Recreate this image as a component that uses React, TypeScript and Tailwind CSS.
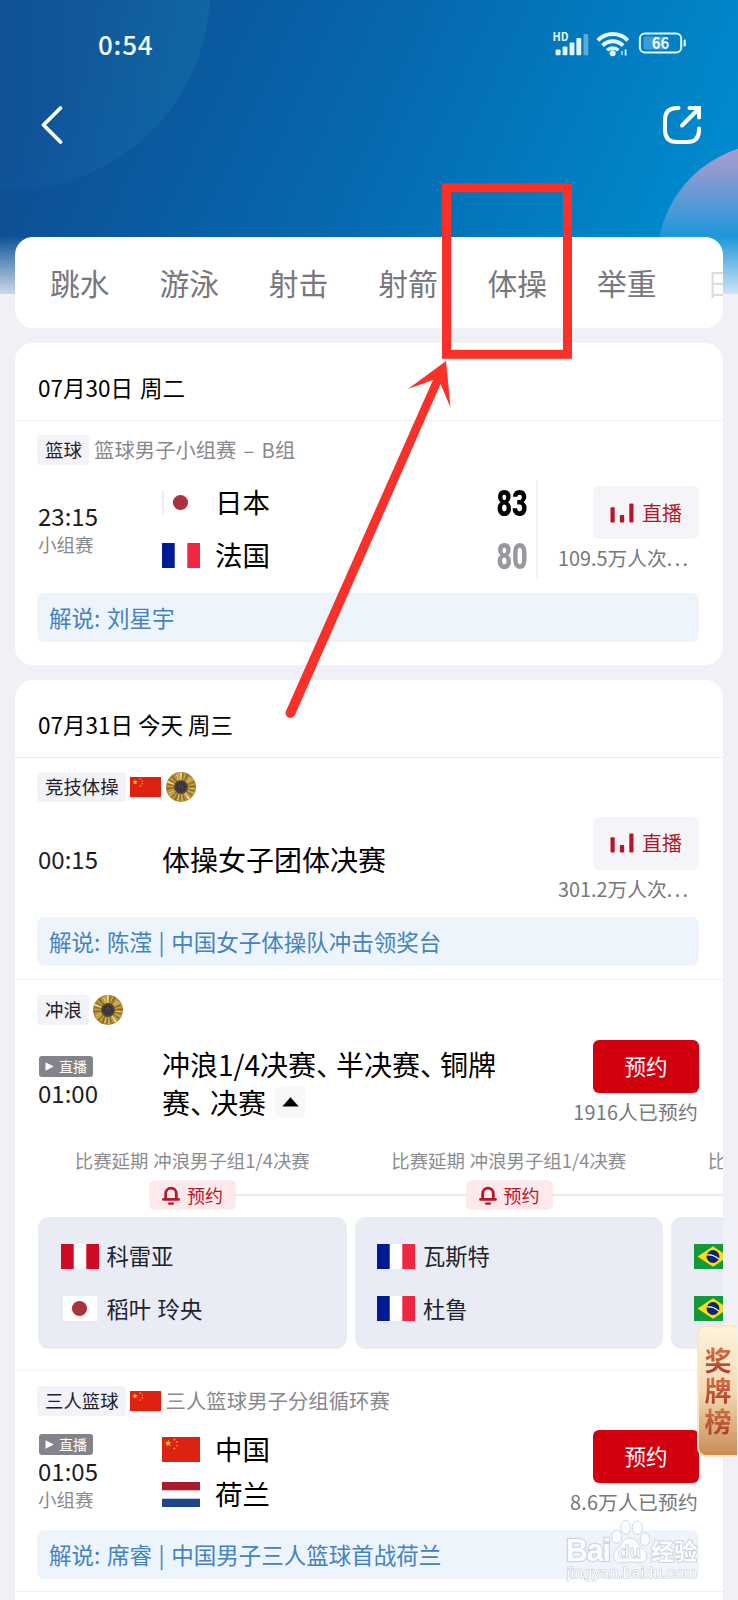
import type { ReactNode } from "react";
import clsx from "clsx";

const tabs = ["跳水", "游泳", "射击", "射箭", "体操", "举重", "日程"];

type Country = "jp" | "fr" | "cn" | "nl" | "pe" | "br";

const heats: { players: { country: Country; name: string }[] }[] = [
  { players: [{ country: "pe", name: "科雷亚" }, { country: "jp", name: "稻叶 玲央" }] },
  { players: [{ country: "fr", name: "瓦斯特" }, { country: "fr", name: "杜鲁" }] },
  { players: [{ country: "br", name: "" }, { country: "br", name: "" }] },
];

const STAR = "M0,-1 L0.225,-0.309 L0.951,-0.309 L0.363,0.118 L0.588,0.809 L0,0.382 L-0.588,0.809 L-0.363,0.118 L-0.951,-0.309 L-0.225,-0.309 Z";

function Flag({ country, className = "w-[38px] h-[25px]" }: { country: Country; className?: string }) {
  return (
    <svg viewBox="0 0 38 25" preserveAspectRatio="none" className={clsx("shrink-0 block", className)}>
      {country === "jp" && (
        <>
          <rect x="0.8" width="35.6" height="25" fill="#fff" />
          <rect x="0.5" width="0.8" height="25" fill="#d5d5d8" />
          <circle cx="18.5" cy="12.5" r="7.6" fill="#ad3140" />
        </>
      )}
      {country === "fr" && (
        <>
          <rect width="38" height="25" fill="#fff" />
          <rect width="12.7" height="25" fill="#001b94" />
          <rect x="25.3" width="12.7" height="25" fill="#ef2740" />
        </>
      )}
      {country === "pe" && (
        <>
          <rect width="38" height="25" fill="#fff" />
          <rect width="12.7" height="25" fill="#cf0a24" />
          <rect x="25.3" width="12.7" height="25" fill="#cf0a24" />
        </>
      )}
      {country === "nl" && (
        <>
          <rect width="38" height="25" fill="#fff" />
          <rect width="38" height="8.3" fill="#a91a2a" />
          <rect y="16.7" width="38" height="8.3" fill="#1f458c" />
        </>
      )}
      {country === "cn" && (
        <>
          <rect width="38" height="25" fill="#dd2211" />
          <path d={STAR} transform="translate(6.2 6.3) scale(3.6)" fill="#fbd61c" />
          <path d={STAR} transform="translate(12.4 2.6) scale(1.3)" fill="#fbd61c" />
          <path d={STAR} transform="translate(15 5) scale(1.3)" fill="#fbd61c" />
          <path d={STAR} transform="translate(15 8.6) scale(1.3)" fill="#fbd61c" />
          <path d={STAR} transform="translate(12.4 11.4) scale(1.3)" fill="#fbd61c" />
        </>
      )}
      {country === "br" && (
        <>
          <rect width="38" height="25" fill="#109a3a" />
          <path d="M3.5 12.5 L19 2.3 L34.5 12.5 L19 22.7 Z" fill="#fbdd16" />
          <circle cx="19" cy="12.5" r="6.4" fill="#10246e" />
          <path d="M12.8 11 Q19.5 10 24.8 15.2" stroke="#fff" strokeWidth="1.1" fill="none" />
        </>
      )}
    </svg>
  );
}

function Medal() {
  const rays = Array.from({ length: 37 }, (_, i) => i * (360 / 37));
  return (
    <svg viewBox="0 0 30 30" className="w-[30px] h-[30px] shrink-0">
      <circle cx="15" cy="15" r="15" fill="#ab862f" />
      {rays.map((angle, i) => (
        <path
          key={angle}
          d={i % 3 === 0 ? "M15 15 L14 0.4 L16 0.4 Z" : "M15 15 L14.5 1.5 L15.5 1.5 Z"}
          transform={`rotate(${angle} 15 15)`}
          fill={i % 5 === 0 ? "#f0e3ac" : i % 2 ? "#8c6a1f" : "#cfad55"}
        />
      ))}
      <circle cx="15" cy="15" r="7" fill="#4d4538" />
      <circle cx="15" cy="15" r="5" fill="#3a353a" />
      <path d="M13 17 L14 12.5 L16.5 13.5 L16 17.5" stroke="#57524f" strokeWidth="0.8" fill="none" />
    </svg>
  );
}

function Tag({ children }: { children: ReactNode }) {
  return (
    <span className="h-[30px] pl-[8px] pr-[7px] flex items-center rounded-[4px] bg-[#f3f2f8] text-[18.4px] text-[#20202c]">
      {children}
    </span>
  );
}

function Meta({ children }: { children: ReactNode }) {
  return <div className="flex items-center h-[30px] pl-[22px] gap-[4.5px]">{children}</div>;
}

function Time({ time, live, stage }: { time: string; live?: boolean; stage?: string }) {
  return (
    <div className="w-[124px] shrink-0 pl-px flex flex-col items-start">
      {live && (
        <span className="h-[21px] w-[54px] rounded-[3px] bg-[#83838b] text-white text-[14px] leading-none flex items-center justify-center gap-[5px]">
          <svg viewBox="0 0 9 9" className="w-[9px] h-[9px]">
            <path d="M0.5 0.3 L8.7 4.5 L0.5 8.7 Z" fill="#fff" />
          </svg>
          直播
        </span>
      )}
      <span className="text-[24px] leading-[31px] h-[34px] -ml-px text-[#1c1c1e]">{time}</span>
      {stage && <span className="-ml-px -mt-[2px] mb-[2px] text-[18.5px] leading-[24px] text-[#8a8a8e]">{stage}</span>}
    </div>
  );
}

function Team({ country, name, score, won }: { country: Country; name: string; score?: string; won?: boolean }) {
  return (
    <div className="h-[34px] flex items-center">
      <Flag country={country} />
      <span className="ml-[15px] -mt-[3px] text-[27.5px] leading-[34px] text-black">{name}</span>
      {score && (
        <span
          className={clsx(
            "ml-auto mt-[2px] origin-right scale-x-[0.75] font-['Roboto'] font-black text-[36px] leading-[34px]",
            won ? "text-black" : "text-[#97999e]"
          )}
        >
          {score}
        </span>
      )}
    </div>
  );
}

function LiveAction({ count }: { count: string }) {
  return (
    <div className="w-[142px] shrink-0 flex flex-col items-end">
      <button className="w-[106px] h-[53px] rounded-[6px] bg-[#f5f5f9] text-[#b0182a] text-[20px] flex items-center justify-center gap-[8px]">
        <svg viewBox="0 0 24 20" className="w-[24px] h-[20px]" fill="#b5162a">
          <rect x="0.5" y="4.2" width="4.2" height="15.3" rx="1" />
          <rect x="9.8" y="12" width="4.4" height="7.5" rx="1" />
          <rect x="19.3" y="0.5" width="4.2" height="19" rx="1" />
        </svg>
        直播
      </button>
      <span className="mt-[4px] w-full pl-px text-[19.8px] leading-[29px] text-[#77777b] whitespace-nowrap">
        {count}
        <span className="tracking-[2.4px]">...</span>
      </span>
    </div>
  );
}

function ReserveAction({ count }: { count: string }) {
  return (
    <div className="w-[142px] shrink-0 flex flex-col items-end">
      <button className="w-[106px] h-[53px] rounded-[6px] bg-[#d2000f] text-white text-[21.5px]">预约</button>
      <span className="mt-[4px] pr-px text-[19.8px] tracking-[0.2px] leading-[29px] text-[#77777b] whitespace-nowrap">{count}</span>
    </div>
  );
}

function Commentary({ children }: { children: ReactNode }) {
  return (
    <div className="ml-[22px] mr-[24px] h-[49px] pl-[12px] flex items-center rounded-[7px] bg-[#edf4fc] text-[22.5px] [word-spacing:1.6px] text-[#4283c0] whitespace-pre">
      {children}
    </div>
  );
}

// half-width ideographic comma, so list items sit closer together
function Comma() {
  return <span className="mr-[6px] [font-feature-settings:'halt']">、</span>;
}

function Heats() {
  return (
    <div className="flex gap-[8px] pl-[23px] h-[229px] overflow-hidden">
      {heats.map((heat, i) => (
        <div key={i} className="w-[308.5px] shrink-0">
          <p className="mt-[8px] h-[22px] leading-[22px] text-center text-[18.4px] text-[#8c8c90] [word-spacing:0.8px]">
            比赛延期 冲浪男子组1/4决赛
          </p>
          <div className="mt-[9px] h-[30px] flex items-center">
            <div className={clsx("h-[2px] w-[111px] shrink-0", i > 0 && "bg-[#ebebed]")} />
            <span className="w-[87px] shrink-0 h-[30px] rounded-[6px] bg-[#fde9eb] flex items-center justify-center gap-[7px] text-[18px] text-[#b5162a]">
              <svg viewBox="0 0 18 19" className="w-[18px] h-[19px]">
                <path d="M3.7 13 V7.5 A5.3 5.3 0 0 1 14.3 7.5 V13" fill="none" stroke="#b5162a" strokeWidth="2.8" />
                <path d="M1.4 13.4 H16.6" stroke="#b5162a" strokeWidth="2.6" strokeLinecap="round" />
                <path d="M7 17.6 H11" stroke="#b5162a" strokeWidth="2.2" strokeLinecap="round" />
              </svg>
              预约
            </span>
            <div className="h-[2px] w-[118.5px] shrink-0 bg-[#ebebed]" />
          </div>
          <div className="mt-[7px] h-[132px] rounded-[11px] bg-[#e9ecf4] pl-[22.5px] pt-[22px] flex flex-col gap-[18.5px]">
            {heat.players.map((player, j) => (
              <div key={j} className="h-[34px] flex items-center gap-[8px] text-[22.3px] [word-spacing:1.5px] text-[#20222c]">
                <Flag country={player.country} />
                {player.name}
              </div>
            ))}
          </div>
        </div>
      ))}
    </div>
  );
}

function StatusBar() {
  return (
    <div className="h-[88px] pl-[98px] pr-[52px] flex items-center justify-between text-[#f0faff]">
      <span className="-mt-[2px] text-[26px] font-medium tracking-[0.8px]">0:54</span>
      <svg viewBox="0 0 134 26" className="w-[134px] h-[26px] overflow-visible">
        <text x="0.5" y="10.3" fontSize="11" fontWeight="700" fill="#e4f6ff" fontFamily="Noto Sans CJK SC" textLength="16" lengthAdjust="spacingAndGlyphs">HD</text>
        <g fill="#e4f6ff">
          <rect x="3.6" y="18.4" width="5" height="5.8" rx="1" />
          <rect x="10.6" y="15.4" width="4.8" height="8.8" rx="1" />
          <rect x="17.6" y="11.4" width="4.8" height="12.8" rx="1" />
          <rect x="24.4" y="7" width="4.8" height="17.2" rx="1" />
          <rect x="31.5" y="3" width="4.8" height="21.2" rx="1" opacity="0.4" />
        </g>
        <g fill="none" stroke="#e4f6ff" strokeWidth="4">
          <path d="M45.8 9.3 A21 21 0 0 1 75.8 9.3" />
          <path d="M50.5 14.6 A14.5 14.5 0 0 1 71 14.6" />
          <path d="M55 19.2 A8.5 8.5 0 0 1 66.5 19.2" strokeWidth="3.4" />
        </g>
        <circle cx="60.7" cy="22.2" r="3" fill="#e4f6ff" />
        <path d="M70 20 V24" stroke="#8fcdf0" strokeWidth="1.8" />
        <path d="M73.6 18.5 V24.5" stroke="#e4f6ff" strokeWidth="1.8" />
        <rect x="87.9" y="2.4" width="41.3" height="19.2" rx="5" fill="none" stroke="#e4f6ff" strokeWidth="2" />
        <rect x="91.5" y="5.5" width="21" height="13" rx="2" fill="#6bb8e6" opacity="0.55" />
        <rect x="131.6" y="8.5" width="2.2" height="7" rx="1" fill="#e4f6ff" />
        <text x="108.5" y="18" textAnchor="middle" fontSize="16" fontWeight="700" fill="#eefaff" fontFamily="Noto Sans CJK SC" textLength="17.5" lengthAdjust="spacingAndGlyphs">66</text>
      </svg>
    </div>
  );
}

function Backdrop() {
  return (
    <svg viewBox="0 0 738 294" className="absolute left-0 top-0 w-[738px] h-[294px]">
      <defs>
        <linearGradient id="sky" gradientUnits="userSpaceOnUse" x1="60" y1="60" x2="700" y2="350">
          <stop offset="0" stopColor="#0e4f93" />
          <stop offset="0.42" stopColor="#0667ae" />
          <stop offset="0.9" stopColor="#0089cd" />
        </linearGradient>
        <linearGradient id="globe" gradientUnits="userSpaceOnUse" x1="0" y1="60" x2="210" y2="60">
          <stop offset="0" stopColor="#1b6fb4" stopOpacity="0.1" />
          <stop offset="1" stopColor="#1b7aa8" stopOpacity="0.4" />
        </linearGradient>
        <linearGradient id="ball" x1="0" y1="0" x2="0" y2="1">
          <stop offset="0" stopColor="#a79ccd" />
          <stop offset="0.12" stopColor="#8f9bd1" />
          <stop offset="0.4" stopColor="#1c98da" />
          <stop offset="1" stopColor="#1c98da" />
        </linearGradient>
        <linearGradient id="fade" x1="0" y1="0" x2="0" y2="1">
          <stop offset="0" stopColor="#eff1f8" stopOpacity="0" />
          <stop offset="1" stopColor="#eff1f8" stopOpacity="0.85" />
        </linearGradient>
      </defs>
      <rect width="738" height="294" fill="url(#sky)" />
      <circle cx="10" cy="-10" r="200" fill="url(#globe)" />
      <circle cx="774" cy="260" r="117" fill="url(#ball)" />
      <rect y="236" width="738" height="58" fill="url(#fade)" />
    </svg>
  );
}

function Watermark() {
  return (
    <svg viewBox="0 0 150 70" className="absolute left-[560px] top-[1515px] w-[150px] h-[70px] opacity-90">
      <g fill="#fdfeff" stroke="#cfd3da" strokeWidth="1">
        <g fontFamily="Liberation Sans, sans-serif" fontWeight="700" style={{ paintOrder: "stroke" }}>
          <text x="6" y="46" fontSize="30.5" strokeWidth="2.5" textLength="45">Bai</text>
          <text x="91" y="45" fontSize="23" strokeWidth="2" fontFamily="Noto Sans CJK SC" textLength="46">经验</text>
          <text x="7" y="62.5" fontSize="15.5" strokeWidth="1.4" fontWeight="400" textLength="130">jingyan.baidu.com</text>
        </g>
        <ellipse cx="56.7" cy="21.7" rx="5" ry="6.5" />
        <ellipse cx="65.7" cy="12.3" rx="5" ry="6.8" />
        <ellipse cx="77.3" cy="12.7" rx="5" ry="6.8" />
        <ellipse cx="85" cy="24.3" rx="4.8" ry="6.4" />
        <path d="M70 23 C77 23 78 30 82 33 C90 39 88 48 79 47.7 C73 46.7 68 46.7 62 47.7 C52 48 51 39 58 33 C62 30 63 23 70 23 Z" />
        <text x="69.5" y="43" textAnchor="middle" fontSize="19" fontWeight="700" fontFamily="Liberation Sans, sans-serif">du</text>
      </g>
    </svg>
  );
}

// hand-drawn style callout pointing at the gymnastics tab
function Callout() {
  return (
    <svg viewBox="0 0 738 760" className="absolute left-0 top-0 w-[738px] h-[760px] pointer-events-none">
      <rect x="446.5" y="187.8" width="121" height="166.5" fill="none" stroke="#fb3129" strokeWidth="9" />
      <path d="M446 361 L408 389 L433 380 L286 711 A4.8 4.8 0 0 0 295 715 L440.5 384 L450.5 407.5 Z" fill="#fb3129" />
    </svg>
  );
}

export default function App() {
  return (
    <div className="relative w-[738px] h-[1600px] overflow-hidden bg-[#eff1f7] font-['Noto_Sans_CJK_SC',sans-serif]">
      <Backdrop />

      <div className="relative">
        <StatusBar />
        <div className="h-[74px] pl-[40px] pr-[36px] flex items-center justify-between">
          <svg viewBox="0 0 24 40" className="w-[24px] h-[40px]">
            <path d="M20.5 3 L3.5 20 L20.5 37" fill="none" stroke="#fff" strokeWidth="3.8" strokeLinecap="round" strokeLinejoin="round" />
          </svg>
          <svg viewBox="0 0 40 40" className="w-[40px] h-[40px]" fill="none" stroke="#fff" strokeWidth="4" strokeLinecap="round">
            <path d="M16.5 3 H15 Q3 3 3 15 V25 Q3 37 15 37 H25 Q37 37 37 25 V23.5" />
            <path d="M20 20.5 L34.5 6" />
            <path d="M27.5 3 H37 V12.5" strokeLinejoin="miter" />
          </svg>
        </div>

        <nav className="mt-[75px] mx-[15px] h-[91px] pb-px rounded-[18px] bg-white overflow-hidden flex items-center gap-[49.4px] pl-[35px] text-[29.8px] text-[#77777d]">
          {tabs.map((tab, i) => (
            <span key={tab} className={clsx("shrink-0 w-[60px] whitespace-nowrap", i === tabs.length - 1 && "opacity-25")}>
              {tab}
            </span>
          ))}
        </nav>

        <section className="mt-[15px] mx-[15px] h-[322px] rounded-[18px] bg-white">
          <h2 className="h-[78px] pl-[23px] pt-[12px] border-b border-[#f0f0f3] text-[22.5px] [word-spacing:2px] text-black flex items-center">
            07月30日 周二
          </h2>
          <div className="pt-[14px]">
            <Meta>
              <Tag>篮球</Tag>
              <span className="-mt-px ml-px text-[20.3px] [word-spacing:2.7px] text-[#88888c]">篮球男子小组赛 – B组</span>
            </Meta>
            <div className="h-[128px] pl-[23px] pr-[24px] flex items-center">
              <Time time="23:15" stage="小组赛" />
              <div className="flex-1 h-[99px] pr-[8px] mr-[19px] border-r-2 border-[#f2f2f4] flex flex-col justify-center gap-[19px]">
                <Team country="jp" name="日本" score="83" won />
                <Team country="fr" name="法国" score="80" />
              </div>
              <LiveAction count="109.5万人次" />
            </div>
            <Commentary>解说: 刘星宇</Commentary>
          </div>
        </section>

        <section className="mt-[15px] mx-[15px] h-[940px] rounded-t-[18px] bg-white overflow-hidden">
          <h2 className="h-[78px] pl-[23px] pt-[12px] border-b border-[#ececef] text-[22.5px] text-black flex items-center">
            07月31日 今天 周三
          </h2>

          <div className="pt-[14px] pb-[13px] border-b border-[#f0f0f3]">
            <Meta>
              <Tag>竞技体操</Tag>
              <Flag country="cn" className="w-[31px] h-[20px]" />
              <Medal />
            </Meta>
            <div className="h-[115px] pl-[23px] pr-[24px] flex items-center">
              <Time time="00:15" />
              <p className="flex-1 pb-[2px] text-[28px] leading-[38px] text-black">体操女子团体决赛</p>
              <LiveAction count="301.2万人次" />
            </div>
            <Commentary>解说: 陈滢 | 中国女子体操队冲击领奖台</Commentary>
          </div>

          <div className="pt-[15px] border-b border-[#f5f5f7]">
            <Meta>
              <Tag>冲浪</Tag>
              <Medal />
            </Meta>
            <div className="h-[116px] pl-[23px] pr-[24px] flex items-center">
              <Time time="01:00" live />
              <div className="flex-1 pb-px text-[28px] leading-[38px] text-black whitespace-nowrap">
                <p>
                  冲浪1/4决赛
                  <Comma />
                  半决赛
                  <Comma />
                  铜牌
                </p>
                <p className="flex items-center">
                  赛
                  <Comma />
                  决赛
                  <span className="ml-[9px] w-[30px] h-[30px] rounded-[4px] bg-[#f8f8f9] flex items-center justify-center">
                    <svg viewBox="0 0 17 10" className="w-[17px] h-[10px]">
                      <path d="M8.5 0.3 L16.7 9.6 H0.3 Z" fill="#000" />
                    </svg>
                  </span>
                </p>
              </div>
              <ReserveAction count="1916人已预约" />
            </div>
            <Heats />
          </div>

          <div className="pt-[15px] pb-[12px] border-b border-[#f0f0f3]">
            <Meta>
              <Tag>三人篮球</Tag>
              <Flag country="cn" className="w-[31px] h-[20px]" />
              <span className="-mt-px text-[20.4px] text-[#88888c]">三人篮球男子分组循环赛</span>
            </Meta>
            <div className="h-[114px] pl-[23px] pr-[24px] flex items-center">
              <Time time="01:05" live stage="小组赛" />
              <div className="flex-1 pb-[2px] flex flex-col gap-[11px]">
                <Team country="cn" name="中国" />
                <Team country="nl" name="荷兰" />
              </div>
              <ReserveAction count="8.6万人已预约" />
            </div>
            <Commentary>解说: 席睿 | 中国男子三人篮球首战荷兰</Commentary>
          </div>
        </section>
      </div>

      <div className="absolute left-[697px] top-[1325px] w-[40px] h-[132px] rounded-l-[9px] border-2 border-r-0 border-[#fbe6bd] bg-gradient-to-b from-[#fdf3dc] via-[#f3d9b4] to-[#c98d55] flex flex-col items-center justify-center pb-px">
        {["奖", "牌", "榜"].map((char) => (
          <span key={char} className="text-[27px] leading-[30.5px] font-bold bg-gradient-to-b from-[#d5764a] to-[#a83c28] bg-clip-text text-transparent">
            {char}
          </span>
        ))}
      </div>

      <Watermark />
      <Callout />
    </div>
  );
}
